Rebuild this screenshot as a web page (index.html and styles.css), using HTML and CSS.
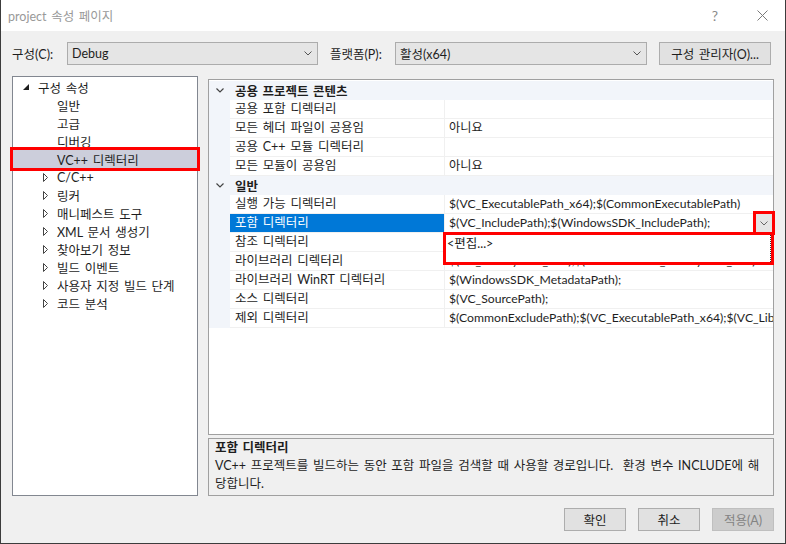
FILE: index.html
```html
<!DOCTYPE html>
<html lang="ko">
<head>
    <meta charset="UTF-8">
    <meta name="viewport" content="width=device-width, initial-scale=1.0">
    <title>project 속성 페이지</title>
    <link rel="stylesheet" href="styles.css">
</head>
<body>
<div class="window">
    <div class="titlebar">
        <span class="title">project 속성 페이지</span>
        <span class="help">?</span>
        <svg class="close" width="11" height="11" viewBox="0 0 11 11"><path d="M0.5 0.5L10.5 10.5M10.5 0.5L0.5 10.5" stroke="#7a7a7a" stroke-width="1" fill="none"/></svg>
    </div>

    <div class="toolbar">
        <label class="lbl lbl-config">구성(C):</label>
        <div class="combo combo-config">
            <span>Debug</span>
            <svg width="8" height="5" viewBox="0 0 8 5"><path d="M0.5 0.5L4 4L7.5 0.5" stroke="#555" fill="none"/></svg>
        </div>
        <label class="lbl lbl-platform">플랫폼(P):</label>
        <div class="combo combo-platform">
            <span>활성(x64)</span>
            <svg width="8" height="5" viewBox="0 0 8 5"><path d="M0.5 0.5L4 4L7.5 0.5" stroke="#555" fill="none"/></svg>
        </div>
        <button class="btn btn-manager">구성 관리자(O)...</button>
    </div>

    <div class="main">
        <div class="tree">
            <div class="node root">
                <svg class="tri" width="6" height="6" viewBox="0 0 6 6"><polygon points="6,0 6,6 0,6" fill="#1e1e1e"/></svg>
                구성 속성
            </div>
            <div class="node leaf">일반</div>
            <div class="node leaf">고급</div>
            <div class="node leaf">디버깅</div>
            <div class="node leaf selected">VC++ 디렉터리</div>
            <div class="node closed"><svg class="tri" width="5" height="9" viewBox="0 0 5 9"><polygon points="0.5,0.5 4.5,4.5 0.5,8.5" fill="none" stroke="#444"/></svg>C/C++</div>
            <div class="node closed"><svg class="tri" width="5" height="9" viewBox="0 0 5 9"><polygon points="0.5,0.5 4.5,4.5 0.5,8.5" fill="none" stroke="#444"/></svg>링커</div>
            <div class="node closed"><svg class="tri" width="5" height="9" viewBox="0 0 5 9"><polygon points="0.5,0.5 4.5,4.5 0.5,8.5" fill="none" stroke="#444"/></svg>매니페스트 도구</div>
            <div class="node closed"><svg class="tri" width="5" height="9" viewBox="0 0 5 9"><polygon points="0.5,0.5 4.5,4.5 0.5,8.5" fill="none" stroke="#444"/></svg>XML 문서 생성기</div>
            <div class="node closed"><svg class="tri" width="5" height="9" viewBox="0 0 5 9"><polygon points="0.5,0.5 4.5,4.5 0.5,8.5" fill="none" stroke="#444"/></svg>찾아보기 정보</div>
            <div class="node closed"><svg class="tri" width="5" height="9" viewBox="0 0 5 9"><polygon points="0.5,0.5 4.5,4.5 0.5,8.5" fill="none" stroke="#444"/></svg>빌드 이벤트</div>
            <div class="node closed"><svg class="tri" width="5" height="9" viewBox="0 0 5 9"><polygon points="0.5,0.5 4.5,4.5 0.5,8.5" fill="none" stroke="#444"/></svg>사용자 지정 빌드 단계</div>
            <div class="node closed"><svg class="tri" width="5" height="9" viewBox="0 0 5 9"><polygon points="0.5,0.5 4.5,4.5 0.5,8.5" fill="none" stroke="#444"/></svg>코드 분석</div>
        </div>

        <div class="side">
            <div class="grid">
                <div class="cat">
                    <span class="gut"><svg width="8" height="5" viewBox="0 0 8 5"><path d="M0.5 0.5L4 4L7.5 0.5" stroke="#444" stroke-width="1.2" fill="none"/></svg></span>
                    <span class="cat-name">공용 프로젝트 콘텐츠</span>
                </div>
                <div class="prop"><span class="gut"></span><span class="name">공용 포함 디렉터리</span><span class="val"><span class="txt"></span></span></div>
                <div class="prop"><span class="gut"></span><span class="name">모든 헤더 파일이 공용임</span><span class="val"><span class="txt">아니요</span></span></div>
                <div class="prop"><span class="gut"></span><span class="name">공용 C++ 모듈 디렉터리</span><span class="val"><span class="txt"></span></span></div>
                <div class="prop"><span class="gut"></span><span class="name">모든 모듈이 공용임</span><span class="val"><span class="txt">아니요</span></span></div>
                <div class="cat">
                    <span class="gut"><svg width="8" height="5" viewBox="0 0 8 5"><path d="M0.5 0.5L4 4L7.5 0.5" stroke="#444" stroke-width="1.2" fill="none"/></svg></span>
                    <span class="cat-name">일반</span>
                </div>
                <div class="prop"><span class="gut"></span><span class="name">실행 가능 디렉터리</span><span class="val"><span class="txt">$(VC_ExecutablePath_x64);$(CommonExecutablePath)</span></span></div>
                <div class="prop active">
                    <span class="gut"></span><span class="name">포함 디렉터리</span>
                    <span class="val"><span class="txt">$(VC_IncludePath);$(WindowsSDK_IncludePath);</span><span class="drop"><svg width="8" height="5" viewBox="0 0 8 5"><path d="M0.5 0.5L4 4L7.5 0.5" stroke="#666" fill="none"/></svg></span></span>
                    <div class="popup"><div class="popup-item">&lt;편집...&gt;</div></div>
                </div>
                <div class="prop"><span class="gut"></span><span class="name">참조 디렉터리</span><span class="val"><span class="txt"></span></span></div>
                <div class="prop"><span class="gut"></span><span class="name">라이브러리 디렉터리</span><span class="val"><span class="txt">$(VC_LibraryPath_x64);$(WindowsSDK_LibraryPath_x64)</span></span></div>
                <div class="prop"><span class="gut"></span><span class="name">라이브러리 WinRT 디렉터리</span><span class="val"><span class="txt">$(WindowsSDK_MetadataPath);</span></span></div>
                <div class="prop"><span class="gut"></span><span class="name">소스 디렉터리</span><span class="val"><span class="txt">$(VC_SourcePath);</span></span></div>
                <div class="prop"><span class="gut"></span><span class="name">제외 디렉터리</span><span class="val"><span class="txt">$(CommonExcludePath);$(VC_ExecutablePath_x64);$(VC_LibraryPath_x64)</span></span></div>
            </div>
            <div class="desc">
                <div class="desc-title">포함 디렉터리</div>
                <div>VC++ 프로젝트를 빌드하는 동안 포함 파일을 검색할 때 사용할 경로입니다.&nbsp; 환경 변수 INCLUDE에 해<br>당합니다.</div>
            </div>
        </div>
    </div>

    <div class="footer">
        <button class="btn">확인</button>
        <button class="btn">취소</button>
        <button class="btn" disabled>적용(A)</button>
    </div>
</div>
</body>
</html>
```

FILE: styles.css
```css
body {
    margin: 0;
    font-family: Lato, "Noto Sans CJK KR", sans-serif;
    font-size: 12.5px;
    word-spacing: 1.5px;
    color: #1e1e1e;
}
.window {
    width: 786px;
    height: 544px;
    box-sizing: border-box;
    border: 1px solid #3c3c3c;
    border-top: none;
    background: #f0f0f0;
    display: flex;
    flex-direction: column;
}

/* 제목 표시줄 */
.titlebar {
    height: 31px;
    flex-shrink: 0;
    background: #fff;
    display: flex;
    align-items: center;
    padding: 0 17px 0 7px;
    color: #999;
}
.title {
    flex: 1;
}
.help {
    margin-right: 39px;
    color: #8a8a8a;
    font-size: 14px;
}

/* 구성 / 플랫폼 줄 */
.toolbar {
    display: flex;
    align-items: center;
    height: 23px;
    margin: 11px 13px 0 11px;
}
.lbl {
    white-space: nowrap;
}
.lbl-config {
    width: 55px;
}
.lbl-platform {
    width: 65px;
    margin-left: 12px;
}
.combo {
    height: 23px;
    box-sizing: border-box;
    border: 1px solid #acacac;
    background: #e5e5e5;
    display: flex;
    align-items: center;
    justify-content: space-between;
    padding: 0 5px 0 4px;
}
.combo-config {
    width: 251px;
}
.combo-platform {
    width: 252px;
}
.btn {
    height: 23px;
    box-sizing: border-box;
    border: 1px solid #adadad;
    background: #e1e1e1;
    font: inherit;
    word-spacing: inherit;
    color: #1e1e1e;
    padding: 0;
}
.btn:disabled {
    background: #cccccc;
    border-color: #bfbfbf;
    color: #838383;
}
.btn-manager {
    width: 112px;
    margin-left: 12px;
}

.main {
    display: flex;
    gap: 10px;
    height: 420px;
    margin: 11px 11px 0 11px;
}

/* 트리 */
.tree {
    width: 186px;
    box-sizing: border-box;
    border: 1px solid #828790;
    background: #fff;
    padding-top: 1px;
}
.node {
    height: 18px;
    display: flex;
    align-items: center;
    white-space: nowrap;
}
.root .tri {
    margin: 0 9px 0 10px;
}
.leaf {
    padding-left: 44px;
}
.closed {
    padding-left: 30px;
}
.closed .tri {
    margin-right: 9px;
}
.selected {
    background: #cccedb;
    outline: 3px solid #f00;
}

/* 속성 그리드 */
.side {
    width: 566px;
    display: flex;
    flex-direction: column;
}
.grid {
    margin-top: 3px;
    height: 358px;
    box-sizing: border-box;
    border: 1px solid #a0a0a0;
    background: #fff;
    padding-top: 1px;
}
.cat {
    height: 19px;
    display: flex;
    align-items: center;
    background: #f2f5fa;
    font-weight: bold;
}
.gut {
    width: 21px;
    flex-shrink: 0;
    display: flex;
    justify-content: center;
    align-items: center;
}
.cat-name {
    padding-left: 5px;
}
.prop {
    height: 19px;
    display: flex;
}
.prop .gut {
    background: #f2f5fa;
}
.prop .name {
    width: 214px;
    flex-shrink: 0;
    box-sizing: border-box;
    padding-left: 5px;
    border-bottom: 1px solid #f0f0f0;
    line-height: 18px;
    white-space: nowrap;
}
.prop .val {
    flex: 1;
    min-width: 0;
    display: flex;
    align-items: center;
    border-left: 1px solid #f0f0f0;
    border-bottom: 1px solid #f0f0f0;
    padding-left: 4px;
}
.val .txt {
    flex: 1;
    min-width: 0;
    overflow: hidden;
    white-space: nowrap;
    line-height: 18px;
    font-size: 12.2px;
}
.active {
    position: relative;
}
.active .name {
    background: #0078d7;
    color: #fff;
}
.drop {
    width: 16px;
    height: 18px;
    margin-right: 1px;
    background: #e5e5e5;
    display: flex;
    align-items: center;
    justify-content: center;
    outline: 3px solid #f00;
}
.popup {
    position: absolute;
    left: 234px;
    right: -1px;
    top: 18px;
    height: 33px;
    box-sizing: border-box;
    border: 3px solid #f00;
    background: #fff;
}
.popup-item {
    height: 100%;
    box-sizing: border-box;
    padding-left: 1px;
    line-height: 18px;
    border-right: 1px dotted #333;
}

/* 설명 */
.desc {
    margin-top: 3px;
    height: 58px;
    box-sizing: border-box;
    border: 1px solid #a0a0a0;
    padding: 0 6px;
    line-height: 18px;
}
.desc-title {
    font-weight: bold;
}

.footer {
    display: flex;
    justify-content: flex-end;
    gap: 12px;
    margin: 12px 11px 0 0;
}
.footer .btn {
    width: 62px;
}
```
